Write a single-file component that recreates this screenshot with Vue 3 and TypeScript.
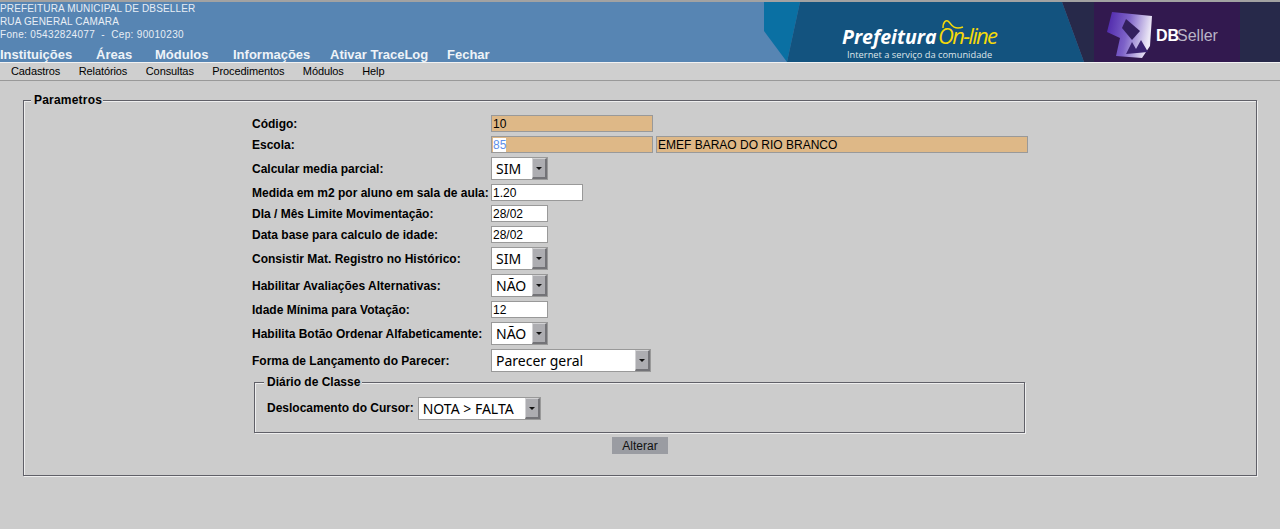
<template>
  <div class="page">
    <header class="topo">
      <div class="topo-info">
        <div class="inst">
          <div>PREFEITURA MUNICIPAL DE DBSELLER</div>
          <div>RUA GENERAL CAMARA</div>
          <div class="fone">Fone: 05432824077&nbsp; -&nbsp; Cep: 90010230</div>
        </div>
        <nav class="nav-top">
          <a v-for="item in navTop" :key="item.label" :style="{ width: item.width + 'px' }">{{ item.label }}</a>
        </nav>
      </div>
      <svg class="banner" width="516" height="60" viewBox="0 0 516 60">
        <defs>
          <linearGradient id="cubo" x1="0" y1="0" x2="1" y2="0.2">
            <stop offset="0" stop-color="#4a22a8" />
            <stop offset="0.5" stop-color="#7d62c8" />
            <stop offset="1" stop-color="#ece8f6" />
          </linearGradient>
        </defs>
        <rect width="516" height="60" fill="#5785b3" />
        <polygon points="0,0 36,0 23,60 0,29" fill="#0a70a3" />
        <polygon points="36,0 298,0 320,60 23,60" fill="#13537f" />
        <polygon points="298,0 516,0 516,60 320,60" fill="#27294a" />
        <rect x="330" width="146" height="60" fill="#32194f" />
        <polygon points="348,10 388,14 386,44 378,56 352,54 356,36 343,30" fill="url(#cubo)" />
        <polygon points="362,17 376,29 368,38 358,26" fill="#33205e" />
        <path d="M362 52 L368 40 L372 47 L377 38 L384 50 Z" fill="#3a2370" />
        <text x="78" y="42" class="logo-pref">Prefeitura</text>
        <text x="174" y="42" class="logo-on">On-line</text>
        <path d="M179 26 C179 20 182 17 185 20 C188 24 191 28 199 25" fill="none" stroke="#f5d90a" stroke-width="1.5" />
        <text x="83" y="56" class="logo-sub">Internet a serviço da comunidade</text>
        <text x="392" y="39" class="logo-db">DB</text>
        <text x="413" y="39" class="logo-seller">Seller</text>
      </svg>
    </header>
    <nav class="nav-sub">
      <a v-for="item in navSub" :key="item">{{ item }}</a>
    </nav>

    <main class="conteudo">
      <fieldset class="grupo">
        <legend>Parametros</legend>
        <div class="form">
          <template v-for="campo in campos" :key="campo.label">
            <label>{{ campo.label }}</label>
            <div class="controle">
              <div v-if="campo.tipo === 'select'" class="select" :style="{ width: campo.width + 'px' }">
                <span>{{ campo.valor }}</span>
                <i class="seta"></i>
              </div>
              <div v-else-if="campo.tipo === 'sel'" class="input ro" :style="{ width: campo.width + 'px' }">
                <span class="selecionado">{{ campo.valor }}</span>
              </div>
              <div v-else class="input" :class="{ ro: campo.tipo === 'ro' }" :style="{ width: campo.width + 'px' }">
                {{ campo.valor }}
              </div>
              <div v-if="campo.extra" class="input ro extra">{{ campo.extra }}</div>
            </div>
          </template>
        </div>
        <fieldset class="grupo diario">
          <legend>Diário de Classe</legend>
          <div class="linha-cursor">
            <label>Deslocamento do Cursor:</label>
            <div class="select cursor">
              <span>NOTA &gt; FALTA</span>
              <i class="seta"></i>
            </div>
          </div>
        </fieldset>
        <div class="acoes">
          <button type="button">Alterar</button>
        </div>
      </fieldset>
    </main>
  </div>
</template>

<script setup lang="ts">
interface Campo {
  label: string;
  tipo: "ro" | "sel" | "text" | "select";
  valor: string;
  width: number;
  extra?: string;
}

const navTop = [
  { label: "Instituições", width: 96 },
  { label: "Áreas", width: 59 },
  { label: "Módulos", width: 78 },
  { label: "Informações", width: 97 },
  { label: "Ativar TraceLog", width: 117 },
  { label: "Fechar", width: 60 },
];

const navSub = ["Cadastros", "Relatórios", "Consultas", "Procedimentos", "Módulos", "Help"];

const campos: Campo[] = [
  { label: "Código:", tipo: "ro", valor: "10", width: 162 },
  { label: "Escola:", tipo: "sel", valor: "85", width: 162, extra: "EMEF BARAO DO RIO BRANCO" },
  { label: "Calcular media parcial:", tipo: "select", valor: "SIM", width: 57 },
  { label: "Medida em m2 por aluno em sala de aula:", tipo: "text", valor: "1.20", width: 92 },
  { label: "DIa / Mês Limite Movimentação:", tipo: "text", valor: "28/02", width: 57 },
  { label: "Data base para calculo de idade:", tipo: "text", valor: "28/02", width: 57 },
  { label: "Consistir Mat. Registro no Histórico:", tipo: "select", valor: "SIM", width: 57 },
  { label: "Habilitar Avaliações Alternativas:", tipo: "select", valor: "NÃO", width: 57 },
  { label: "Idade Mínima para Votação:", tipo: "text", valor: "12", width: 57 },
  { label: "Habilita Botão Ordenar Alfabeticamente:", tipo: "select", valor: "NÃO", width: 57 },
  { label: "Forma de Lançamento do Parecer:", tipo: "select", valor: "Parecer geral", width: 160 },
];
</script>

<style>
html,
body {
  margin: 0;
  background: #cccccc;
}
</style>

<style scoped>
.page {
  min-height: 529px;
  background: #cccccc;
  font-family: "Liberation Sans", Arial, sans-serif;
  color: #000;
}

.topo {
  display: flex;
  justify-content: space-between;
  height: 60px;
  border-top: 2px solid #a2a2a2;
  border-bottom: 1px solid #f2f2f2;
  background: #5785b3;
  overflow: hidden;
}

.inst {
  font-size: 10px;
  line-height: 13px;
  letter-spacing: 0.15px;
  color: #e8eef5;
}

.fone {
  letter-spacing: 0.33px;
}

.nav-top {
  display: flex;
  margin-top: 6px;
  font-size: 13px;
  font-weight: bold;
  line-height: 15px;
  color: #eef3f8;
  white-space: nowrap;
}

.banner {
  display: block;
  flex: none;
}

.logo-pref {
  font: italic bold 19.5px "Open Sans", sans-serif;
  fill: #fff;
}

.logo-on {
  font: italic 22px "Open Sans", sans-serif;
  fill: #f5d90a;
  letter-spacing: -1.7px;
}

.logo-sub {
  font: 9.3px "Open Sans", sans-serif;
  fill: #dfe6ea;
}

.logo-db {
  font: bold 16px "Liberation Sans", sans-serif;
  fill: #fff;
}

.logo-seller {
  font: 16px "Liberation Sans", sans-serif;
  fill: #b9b4c6;
}

.nav-sub {
  display: flex;
  gap: 18.5px;
  height: 17px;
  padding-left: 11px;
  border-bottom: 1px solid #999;
  background: #cfcfcf;
  font-size: 11px;
  letter-spacing: -0.1px;
  line-height: 17px;
}

.conteudo {
  padding: 12px 23px 0;
}

.grupo {
  margin: 0;
  padding: 0;
  min-width: 0;
  border: 1px solid #606068;
  box-shadow: 1px 1px 0 #eeeeee, inset 1px 1px 0 #eeeeee;
}

.grupo > legend {
  margin-left: 7px;
  padding: 0 1px 0 3px;
  background: #cccccc;
  font-size: 12px;
  font-weight: bold;
  letter-spacing: 0.2px;
  line-height: 14px;
}

.form {
  display: grid;
  grid-template-columns: 239px 537px;
  row-gap: 4px;
  justify-content: center;
  margin-top: 8px;
  font-size: 12px;
}

.form label,
.linha-cursor label {
  font-weight: bold;
  white-space: nowrap;
}

.form label {
  align-self: center;
}

.controle {
  display: flex;
  gap: 3px;
}

.input {
  box-sizing: border-box;
  height: 17px;
  padding: 0 1px;
  border: 1px solid #999;
  background: #fff;
  font-size: 12px;
  line-height: 16px;
  white-space: nowrap;
}

.ro {
  background: #deb887;
}

.extra {
  width: 372px;
}

.selecionado {
  background: #fff;
  color: #5f8fe8;
}

.select {
  box-sizing: border-box;
  display: flex;
  justify-content: space-between;
  height: 23px;
  border: 1px solid #999;
  background: #fff;
  font: 14px "Noto Sans", sans-serif;
  line-height: 21px;
}

.select span {
  padding-left: 4px;
  white-space: nowrap;
}

.cursor {
  width: 123px;
}

.seta {
  position: relative;
  flex: none;
  box-sizing: border-box;
  width: 15px;
  border-top: 1px solid #d2d2d4;
  border-left: 1px solid #d2d2d4;
  border-right: 2px solid #737377;
  border-bottom: 2px solid #737377;
  background: #adadb1;
}

.seta::after {
  content: "";
  position: absolute;
  top: 8px;
  left: 3px;
  border-top: 3px solid #111;
  border-left: 3px solid transparent;
  border-right: 3px solid transparent;
}

.diario {
  width: 769px;
  margin: 3px 0 0 230px;
}

.diario > legend {
  margin-left: 9px;
  padding: 0 2px 0 3px;
  letter-spacing: 0;
}

.linha-cursor {
  display: flex;
  align-items: flex-start;
  gap: 4px;
  height: 35px;
  padding: 8px 0 0 12px;
  font-size: 12px;
}

.linha-cursor label {
  line-height: 23px;
}

.acoes {
  display: flex;
  justify-content: center;
  margin: 4px 0 21px;
}

button {
  width: 56px;
  height: 17px;
  padding: 0;
  border: 0;
  background: #9a9ca2;
  font: 12px "Liberation Sans", sans-serif;
  color: #111;
}
</style>
